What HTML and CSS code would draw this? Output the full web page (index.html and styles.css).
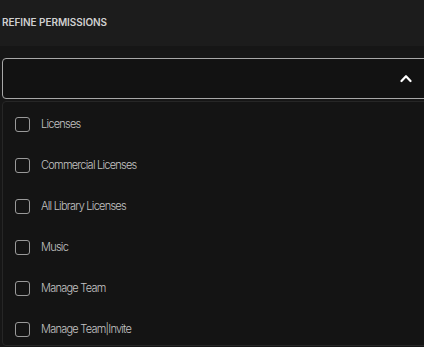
FILE: index.html
```html
<!DOCTYPE html>
<html lang="en">
<head>
    <meta charset="UTF-8">
    <meta name="viewport" content="width=device-width, initial-scale=1.0">
    <title>Refine permissions</title>
    <link rel="stylesheet" href="styles.css">
</head>
<body>

    <header class="top">
        <h3>Refine Permissions</h3>
    </header>

    <main class="felt">
        <div class="vaelger">
            <span class="pil">
                <svg width="12" height="9" viewBox="0 0 12 9"><path d="M1.5 7 L6 2.2 L10.5 7" fill="none" stroke="#fff" stroke-width="2.2" stroke-linecap="round" stroke-linejoin="round"/></svg>
            </span>
        </div>

        <ul class="liste">
            <li><span class="boks"></span>Licenses</li>
            <li><span class="boks"></span>Commercial Licenses</li>
            <li><span class="boks"></span>All Library Licenses</li>
            <li><span class="boks"></span>Music</li>
            <li><span class="boks"></span>Manage Team</li>
            <li><span class="boks"></span>Manage Team|Invite</li>
        </ul>
    </main>

</body>
</html>
```

FILE: styles.css
```css
body {
    margin: 0;
    background-color: #161616;
    font-family: Inter, "Noto Sans", sans-serif;
    overflow: hidden;
    width: 424px;
    height: 347px;
}

.top {
    background-color: #1c1c1c;
    height: 46px;
    display: flex;
    align-items: center;
    padding-left: 2px;
}

.top h3 {
    margin: 0;
    margin-top: -2px;
    font-size: 10px;
    font-weight: 600;
    text-transform: uppercase;
    color: #d0d0d0;
    letter-spacing: -0.05px;
}

.felt {
    padding: 12px 0 0 2px;
}

.vaelger {
    width: 440px;
    border: 1px solid #a8a8a8;
    border-radius: 4px;
    background-color: #121212;
    box-sizing: border-box;
    height: 41px;
    display: flex;
    align-items: center;
    justify-content: flex-end;
}

.pil {
    display: flex;
    margin-right: 29px;
    margin-top: -1px;
}

.liste {
    list-style: none;
    margin: 2px 0 0;
    padding: 12px 0 6px;
    width: 440px;
    border: 1px solid #262626;
    border-radius: 4px;
    background-color: #141414;
    display: flex;
    flex-direction: column;
    gap: 21px;
}

.liste li {
    height: 20px;
    display: flex;
    align-items: center;
    color: #c4c4c4;
    font-size: 11px;
    font-weight: 300;
    letter-spacing: -0.75px;
}

.boks {
    width: 15px;
    height: 15px;
    box-sizing: border-box;
    border: 1.5px solid #9a9a9a;
    border-radius: 3px;
    margin: 0 11px 0 12px;
}
```
